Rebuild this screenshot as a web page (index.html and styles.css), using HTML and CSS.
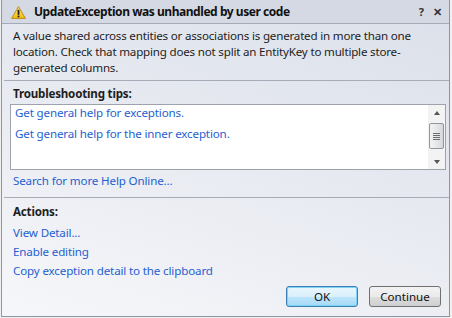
FILE: index.html
```html
<!DOCTYPE html>
<html>
<head>
<meta charset="utf-8">
<link rel="stylesheet" href="styles.css">
</head>
<body>
<div class="dialog">
  <div class="titlebar">
    <svg class="warn" width="15" height="13" viewBox="0 0 15 13">
      <defs>
        <linearGradient id="g" x1="0" y1="0" x2="0" y2="1">
          <stop offset="0" stop-color="#ffe98a"/>
          <stop offset="1" stop-color="#f2b90c"/>
        </linearGradient>
      </defs>
      <path d="M7.5 0.6 L14.4 12.4 L0.6 12.4 Z" fill="url(#g)" stroke="#b8860b" stroke-width="0.9" stroke-linejoin="round"/>
      <rect x="6.6" y="3.8" width="1.8" height="5" fill="#222"/>
      <rect x="6.6" y="9.6" width="1.8" height="1.7" fill="#222"/>
    </svg>
    <div class="title">UpdateException was unhandled by user code</div>
    <div class="tb-btns"><span class="help">?</span><span class="close">✕</span></div>
  </div>
  <div class="content">
    <p class="msg">A value shared across entities or associations is generated in more than one location. Check that mapping does not split an EntityKey to multiple store-generated columns.</p>
    <div class="sep"></div>
    <div class="section">
      <div class="heading">Troubleshooting tips:</div>
      <div class="listbox">
        <div class="items">
          <a class="link">Get general help for exceptions.</a>
          <a class="link">Get general help for the inner exception.</a>
        </div>
        <div class="scrollbar">
          <span class="arrow up"></span>
          <span class="thumb"><i></i><i></i><i></i><i></i></span>
          <span class="arrow down"></span>
        </div>
      </div>
      <a class="link search">Search for more Help Online...</a>
    </div>
    <div class="sep sep2"></div>
    <div class="section actions">
      <div class="heading">Actions:</div>
      <a class="link">View Detail...</a>
      <a class="link">Enable editing</a>
      <a class="link">Copy exception detail to the clipboard</a>
    </div>
    <div class="buttons">
      <button class="btn default">OK</button>
      <button class="btn">Continue</button>
    </div>
  </div>
</div>
</body>
</html>
```
FILE: styles.css
```css
* { box-sizing: border-box; }
html, body { margin: 0; padding: 0; background: #f0f0f0; }
body {
  font-family: "Noto Sans", "Open Sans", sans-serif;
  font-size: 12px;
  color: #1e1e1e;
  width: 452px;
  height: 318px;
  overflow: hidden;
}
.dialog {
  margin-left: 1px;
  width: 449px;
  height: 317px;
  border: 1px solid #8d95a2;
  border-top: none;
  display: flex;
  flex-direction: column;
  background: linear-gradient(200deg, #dbe0ea 0%, #e6e9f0 45%, #f6f7fa 100%);
}
.titlebar {
  height: 24px;
  flex: none;
  display: flex;
  align-items: center;
  background: #d4d9e3;
  border-bottom: 1px solid #a3aab6;
  padding-left: 9px;
}
.warn { flex: none; margin-top: 1px; }
.title {
  margin-left: 8px;
  font-weight: bold;
  font-size: 12px;
  letter-spacing: -0.45px;
  color: #111;
  flex: 1;
}
.tb-btns { display: flex; gap: 9px; padding-right: 7px; font-size: 11px; font-weight: bold; color: #333; }
.help { font-size: 11px; }
.close { font-size: 11px; }
.content {
  flex: 1;
  display: flex;
  flex-direction: column;
  padding: 4px 0 0 0;
}
.msg {
  margin: 0;
  padding: 0 12px 0 11px;
  line-height: 16px;
  font-size: 11.6px;
  letter-spacing: -0.2px;
}
.sep {
  height: 1px;
  background: #a5acb8;
  margin: 4px 0 0 2px;
}
.sep2 { margin-top: 8px; }
.section {
  display: flex;
  flex-direction: column;
  padding: 5px 0 0 11px;
}
.heading {
  font-weight: bold;
  line-height: 16px;
  font-size: 11.6px;
  letter-spacing: -0.2px;
}
.link {
  color: #1f5fcf;
  line-height: 16px;
  font-size: 11.6px;
  letter-spacing: -0.15px;
  cursor: pointer;
}
.listbox {
  margin: 2px 0 0 -3px;
  width: 436px;
  height: 66px;
  background: #fff;
  border: 1px solid #9ea3ab;
  display: flex;
}
.items {
  flex: 1;
  display: flex;
  flex-direction: column;
  gap: 5px;
  padding: 0 0 0 4px;
}
.scrollbar {
  width: 17px;
  flex: none;
  background: #f3f3f3;
  display: flex;
  flex-direction: column;
  align-items: center;
  padding: 6px 0 5px;
}
.arrow { width: 0; height: 0; border-left: 3.5px solid transparent; border-right: 3.5px solid transparent; }
.arrow.up { border-bottom: 4px solid #555; }
.arrow.down { border-top: 4px solid #555; margin-top: auto; }
.thumb {
  margin-top: 8px;
  width: 15px;
  height: 26px;
  border: 1px solid #8f969e;
  border-radius: 2px;
  background: linear-gradient(90deg, #f3f3f3, #e3e5e8 60%, #d3d6da);
  display: flex;
  flex-direction: column;
  align-items: center;
  justify-content: center;
  gap: 1px;
}
.thumb i { display: block; width: 7px; height: 1px; background: #6b6f75; }
.search { margin-top: 3px; }
.actions { padding-top: 6px; gap: 3px; }
.actions .heading { margin-bottom: 2px; }
.buttons {
  margin-top: auto;
  display: flex;
  justify-content: flex-end;
  gap: 11px;
  padding: 0 8px 9px 0;
}
.btn {
  width: 72px;
  height: 21px;
  font-family: "Noto Sans", "Open Sans", sans-serif;
  font-size: 11.6px;
  color: #111;
  border: 1px solid #707070;
  border-radius: 3px;
  background: linear-gradient(#f2f2f2 0%, #ebebeb 50%, #dddddd 51%, #cfcfcf 100%);
  padding: 0;
  line-height: 18px;
}
.btn.default {
  border-color: #3c7fb1;
  background: linear-gradient(#eaf6fd 0%, #d9f0fc 50%, #bee6fd 51%, #a7d9f5 100%);
  box-shadow: inset 0 0 0 1px #7dd3f3;
}
```
